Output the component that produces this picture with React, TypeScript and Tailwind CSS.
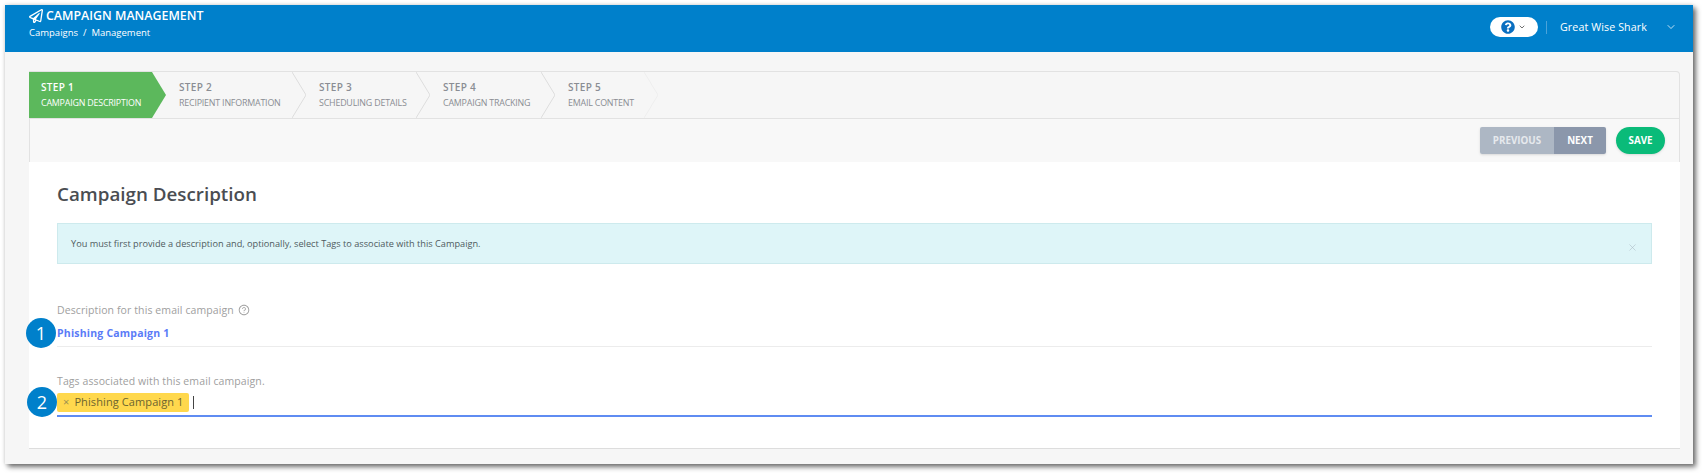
import { FaRegPaperPlane, FaQuestionCircle } from "react-icons/fa";
import { AiOutlineQuestionCircle } from "react-icons/ai";
import { ChevronDown, X } from "lucide-react";

const steps = [
  { label: "STEP 1", title: "CAMPAIGN DESCRIPTION", width: "w-[137px]", active: true },
  { label: "STEP 2", title: "RECIPIENT INFORMATION", width: "w-[140px]" },
  { label: "STEP 3", title: "SCHEDULING DETAILS", width: "w-[124px]" },
  { label: "STEP 4", title: "CAMPAIGN TRACKING", width: "w-[125px]" },
  { label: "STEP 5", title: "EMAIL CONTENT", width: "w-[103px]", faint: true },
];

const Chevron = ({ active, faint }: { active?: boolean; faint?: boolean }) => (
  <svg className="absolute top-0 right-0 h-[46px] w-[14px]" viewBox="0 0 14 46" fill="none">
    {active ? (
      <path d="M0 0L14 23L0 46Z" fill="#5cb85c" />
    ) : (
      <path d="M0 0L14 23L0 46" stroke={faint ? "#eeeeee" : "#dddddd"} strokeWidth="1" />
    )}
  </svg>
);

const Step = ({ step }: { step: (typeof steps)[number] }) => (
  <div
    className={`relative flex flex-col justify-center ${step.width} ${
      step.active ? "pl-[12px] text-white" : "pl-[13px] text-[#8a8d93]"
    }`}
  >
    {step.active && <div className="absolute top-0 bottom-0 left-0 right-[14px] bg-[#5cb85c]" />}
    <Chevron active={step.active} faint={step.faint} />
    <div className="relative text-[10px] leading-[15px] font-semibold tracking-[0.3px]">{step.label}</div>
    <div className="relative text-[8.9px] leading-[15px] tracking-[-0.2px] whitespace-nowrap">{step.title}</div>
  </div>
);

const Badge = ({ n, className }: { n: number; className: string }) => (
  <div
    className={`absolute flex h-[30px] w-[30px] items-center justify-center rounded-full bg-[#0080cb] text-[18px] text-white ${className}`}
  >
    {n}
  </div>
);

export default function App() {
  return (
    <div className="h-[473px] bg-white p-[5px] pr-[9px] font-['Open_Sans',sans-serif]">
      <div className="h-[459px] bg-[#f6f6f6] shadow-[3px_3px_5px_rgba(0,0,0,0.55),0_0_4px_rgba(0,0,0,0.15)]">
        <header className="flex h-[47px] items-start justify-between bg-[#0080cb] pl-[24px] pr-[16px] text-white">
          <div className="pt-[1px]">
            <div className="flex items-center gap-[3px] text-[12.4px] leading-[20px] font-semibold">
              <FaRegPaperPlane className="h-[14px] w-[14px]" />
              CAMPAIGN MANAGEMENT
            </div>
            <div className="text-[9.5px] leading-[14px]">Campaigns &nbsp;/&nbsp; Management</div>
          </div>
          <div className="flex items-center pt-[12px]">
            <div className="flex h-[20px] w-[48px] items-center justify-center gap-[3px] rounded-full bg-white">
              <FaQuestionCircle className="h-[14px] w-[14px] text-[#0a6fc0]" />
              <ChevronDown className="h-[8px] w-[8px] text-[#555555]" strokeWidth={2.5} />
            </div>
            <div className="ml-[8px] h-[13px] w-px bg-[#4aa3da]" />
            <div className="ml-[13px] text-[10.7px] leading-[20px] tracking-[0.1px]">Great Wise Shark</div>
            <ChevronDown className="ml-[18px] h-[12px] w-[12px]" strokeWidth={1.5} />
          </div>
        </header>

        <div className="mt-[19px] ml-[24px] w-[1651px]">
          <div className="flex h-[48px] rounded-tr-[4px] border-y border-r border-[#e2e2e2]">
            {steps.map((s) => (
              <Step key={s.label} step={s} />
            ))}
          </div>
          <div className="flex h-[43px] items-start justify-end border-x border-[#e2e2e2] bg-[#f8f8f8] pt-[8px] pr-[14px]">
            <div className="flex h-[27px] overflow-hidden rounded-[2px] text-[9.8px] leading-[27px] font-bold text-white shadow-sm">
              <div className="w-[74px] bg-[#adb7c4] text-center text-[#e6e9ed]">PREVIOUS</div>
              <div className="w-[52px] bg-[#8b97ab] text-center">NEXT</div>
            </div>
            <div className="ml-[10px] h-[27px] w-[49px] rounded-full bg-[#0abb79] text-center text-[9.8px] leading-[27px] font-bold text-white shadow-sm">
              SAVE
            </div>
          </div>
          <main className="relative h-[287px] border-b border-[#dddddd] bg-white px-[28px] pt-[19px]">
            <h2 className="text-[18.8px] leading-[26px] font-semibold text-[#4a4d52]">Campaign Description</h2>
            <div className="relative mt-[16px] flex h-[41px] items-center border border-[#cdeaed] bg-[#def5f8] pl-[13px] text-[9.2px] text-[#4f5b60]">
              You must first provide a description and, optionally, select Tags to associate with this Campaign.
              <X className="absolute top-[18px] right-[13px] h-[11px] w-[11px] text-[#a9b8c2]" strokeWidth={1.2} />
            </div>

            <div className="mt-[38px] flex items-center gap-[4px] text-[10.5px] leading-[16px] tracking-[0.1px] text-[#a0a0a0]">
              Description for this email campaign
              <AiOutlineQuestionCircle className="h-[12px] w-[12px]" />
            </div>
            <div className="mt-[7px] h-[22px] border-b border-[#ececec] text-[10.5px] leading-[16px] font-bold tracking-[0.2px] text-[#5a7bf7]">
              Phishing Campaign 1
            </div>
            <Badge n={1} className="top-[156px] left-[-3px]" />

            <div className="mt-[26px] text-[10.5px] leading-[16px] tracking-[0.1px] text-[#a0a0a0]">
              Tags associated with this email campaign.
            </div>
            <div className="mt-[4px] flex h-[24px] items-start border-b-2 border-[#5f8cf2]">
              <div className="flex h-[19px] w-[132px] items-center rounded-[2px] bg-[#ffd84d] pl-[6px] text-[11px] tracking-[0.1px] text-[#6b6430]">
                <span className="mr-[5px] text-[11px] text-[#9d9252]">×</span>
                Phishing Campaign 1
              </div>
              <div className="mt-[3px] ml-[4px] h-[13px] w-px bg-[#444444]" />
            </div>
            <Badge n={2} className="top-[225px] left-[-2px]" />
          </main>
        </div>
      </div>
    </div>
  );
}
